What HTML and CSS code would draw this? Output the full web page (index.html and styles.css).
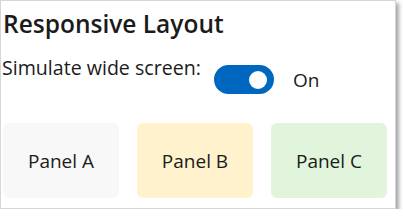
FILE: index.html
```html
<!DOCTYPE html>
<html lang="en">
<head>
    <meta charset="UTF-8">
    <title>Responsive Layout</title>
    <link rel="stylesheet" href="styles.css">
</head>
<body>
    <div class="card">
        <h1 class="title">Responsive Layout</h1>
        <div class="option-row">
            <span class="option-label">Simulate wide screen:</span>
            <div class="switch-group">
                <div class="switch on"><span class="knob"></span></div>
                <span class="switch-state">On</span>
            </div>
        </div>
        <div class="panels">
            <div class="panel panel-a">Panel A</div>
            <div class="panel panel-b">Panel B</div>
            <div class="panel panel-c">Panel C</div>
        </div>
    </div>
</body>
</html>
```

FILE: styles.css
```css
body {
    margin: 0;
    font-family: "Open Sans", "Noto Sans", sans-serif;
    color: #1b1b1b;
    background-color: #fff;
}
.card {
    width: 385px;
    padding: 0 8px 10px 1px;
    border: 1px solid #d6d6d6;
    background-color: #fff;
    box-shadow: 3px 3px 4px rgba(0, 0, 0, 0.35);
}
.title {
    margin: 6px 0 0 1px;
    font-size: 24.5px;
    font-weight: 600;
    line-height: 34px;
}
.option-row {
    display: flex;
    align-items: flex-start;
    margin-top: 14px;
}
.option-label {
    font-size: 19.6px;
    line-height: 26px;
}
.switch-group {
    display: flex;
    align-items: center;
    margin-left: 13px;
    margin-top: 10px;
}
.switch {
    width: 60px;
    height: 29px;
    border-radius: 15px;
    background-color: #0067c0;
    display: flex;
    align-items: center;
    justify-content: flex-end;
    padding-right: 7px;
    box-sizing: border-box;
}
.knob {
    width: 18px;
    height: 18px;
    border-radius: 50%;
    background-color: #fff;
}
.switch-state {
    margin-left: 19px;
    font-size: 19px;
}
.panels {
    display: flex;
    gap: 18px;
    margin-top: 29px;
    padding-left: 1px;
}
.panel {
    flex: 1;
    height: 75px;
    border-radius: 6px;
    display: flex;
    align-items: center;
    justify-content: center;
    font-size: 19px;
}
.panel-a {
    background-color: #f8f8f8;
}
.panel-b {
    background-color: #fff2cc;
}
.panel-c {
    background-color: #e0f5dc;
}
```
